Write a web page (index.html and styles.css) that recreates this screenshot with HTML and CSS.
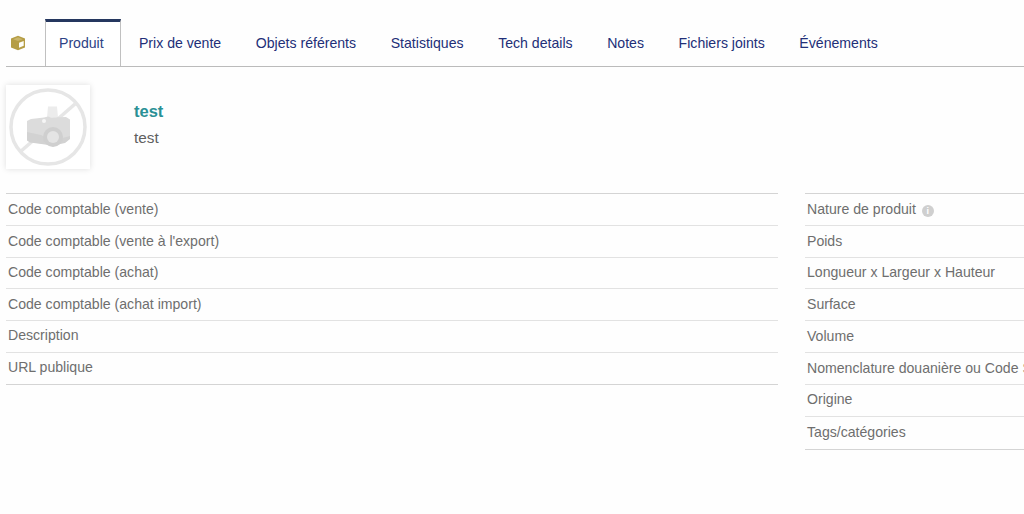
FILE: index.html
```html
<!DOCTYPE html>
<html lang="fr">
<head>
<meta charset="utf-8">
<title>Produit</title>
<link rel="stylesheet" href="styles.css">
</head>
<body>
<nav class="tabs">
  <span class="tab-icon">
    <svg width="16" height="16" viewBox="0 0 16 16"><path fill="#b59d45" d="M8 .8l7 2.700v9L8 15.200l-7-2.700v-9z"/><path fill="#fdfdf8" d="M9 7.800l4.700-1.900v4.900L9 12.700z"/><path fill="#c9b56a" d="M8 2.300l4.800 1.900L8 6.100 3.200 4.200z"/></svg>
  </span>
  <a class="tab active">Produit</a>
  <a class="tab">Prix de vente</a>
  <a class="tab">Objets référents</a>
  <a class="tab">Statistiques</a>
  <a class="tab">Tech details</a>
  <a class="tab">Notes</a>
  <a class="tab">Fichiers joints</a>
  <a class="tab">Événements</a>
</nav>
<header class="banner">
  <div class="photo">
    <svg width="78" height="78" viewBox="0 0 78 78">
      <circle cx="39" cy="39" r="37" fill="none" stroke="#e6e6e6" stroke-width="3.500"/>
      <path d="M11 64L66 16" stroke="#e6e6e6" stroke-width="3.500"/>
      <path fill="#ececec" d="M39 18.500h9l1 11h-11z"/>
      <path fill="#dcdcdc" d="M18 33l4-2 13-1.500 4-1 3 1 15-.5 4 2.500v19l-5 4-12 2.500-8-1-15-2-3-2z"/>
      <path fill="#d2d2d2" d="M18 44l14 3 10 6 19-5v3l-5 4-12 2.500-8-1-15-2-3-2z"/>
      <circle cx="44" cy="49" r="10" fill="#cfcfcf"/>
      <circle cx="44" cy="49" r="6" fill="#e4e4e4"/>
      <circle cx="35" cy="33" r="2" fill="#f6f6f6"/>
    </svg>
  </div>
  <div class="title">
    <div class="ref">test</div>
    <div class="label">test</div>
  </div>
</header>
<main class="columns">
  <section class="col col-left">
    <div class="row">Code comptable (vente)</div>
    <div class="row">Code comptable (vente à l'export)</div>
    <div class="row">Code comptable (achat)</div>
    <div class="row">Code comptable (achat import)</div>
    <div class="row">Description</div>
    <div class="row">URL publique</div>
  </section>
  <section class="col col-right">
    <div class="row">Nature de produit <span class="info">i</span></div>
    <div class="row">Poids</div>
    <div class="row">Longueur x Largeur x Hauteur</div>
    <div class="row">Surface</div>
    <div class="row">Volume</div>
    <div class="row">Nomenclature douanière ou Code SH</div>
    <div class="row">Origine</div>
    <div class="row row-tall">Tags/catégories</div>
  </section>
</main>
</body>
</html>
```
FILE: styles.css
```css
html, body {
  margin: 0;
  height: 100%;
  overflow: hidden;
  background: #fefefe;
}
body {
  font-family: "Liberation Sans", Arial, sans-serif;
  font-size: 14.100px;
  color: #6e6e6e;
}
.tabs {
  display: flex;
  align-items: stretch;
  height: 47px;
  margin: 19px 0 0 6px;
  border-bottom: 1px solid #bbb;
}
.tab-icon {
  width: 39px;
  display: flex;
  align-items: center;
  padding: 0 0 0 4px;
  box-sizing: border-box;
}
.tab {
  display: flex;
  align-items: center;
  padding: 0 17.300px;
  color: #222f78;
}
.tab.active {
  padding: 0 16px 2px 13px;
  margin-right: 1px;
  color: #2d4285;
  border: 1px solid #c0c0c0;
  border-top: 3px solid #25375f;
  border-bottom: 0;
  background: #fff;
}
.banner {
  display: flex;
  margin: 18px 0 0 6px;
  height: 84px;
}
.photo {
  width: 84px;
  height: 84px;
  background: #fff;
  box-shadow: 0 0 6px rgba(0, 0, 0, 0.13);
  display: flex;
  align-items: center;
  justify-content: center;
}
.title {
  margin-left: 44px;
  padding-top: 16px;
}
.ref {
  font-size: 16.500px;
  font-weight: bold;
  color: #2a9095;
  line-height: 20px;
}
.label {
  margin-top: 8px;
  font-size: 15.300px;
  line-height: 18px;
  color: #606060;
}
.columns {
  display: flex;
  gap: 27px;
  margin: 24px 0 0 6px;
}
.col {
  flex: none;
  width: 772px;
  border-top: 1px solid #d4d4d4;
}
.row {
  box-sizing: border-box;
  height: 31.800px;
  padding: 6.600px 2px 0;
  line-height: 16px;
  border-bottom: 1px solid #e2e2e2;
  white-space: nowrap;
}
.row:last-child {
  border-bottom-color: #d4d4d4;
}
.row:nth-child(2) {
  padding-top: 7.200px;
}
.col-left .row:nth-child(n+5) {
  padding-top: 6px;
}
.col-right .row-tall {
  height: 33.500px;
  padding-top: 7.400px;
}
.info {
  display: inline-block;
  width: 12px;
  height: 12px;
  margin-left: 2px;
  border-radius: 50%;
  background: #cfcfcf;
  color: #fff;
  font-size: 9px;
  font-weight: bold;
  line-height: 12px;
  text-align: center;
  vertical-align: -0.500px;
}
```
